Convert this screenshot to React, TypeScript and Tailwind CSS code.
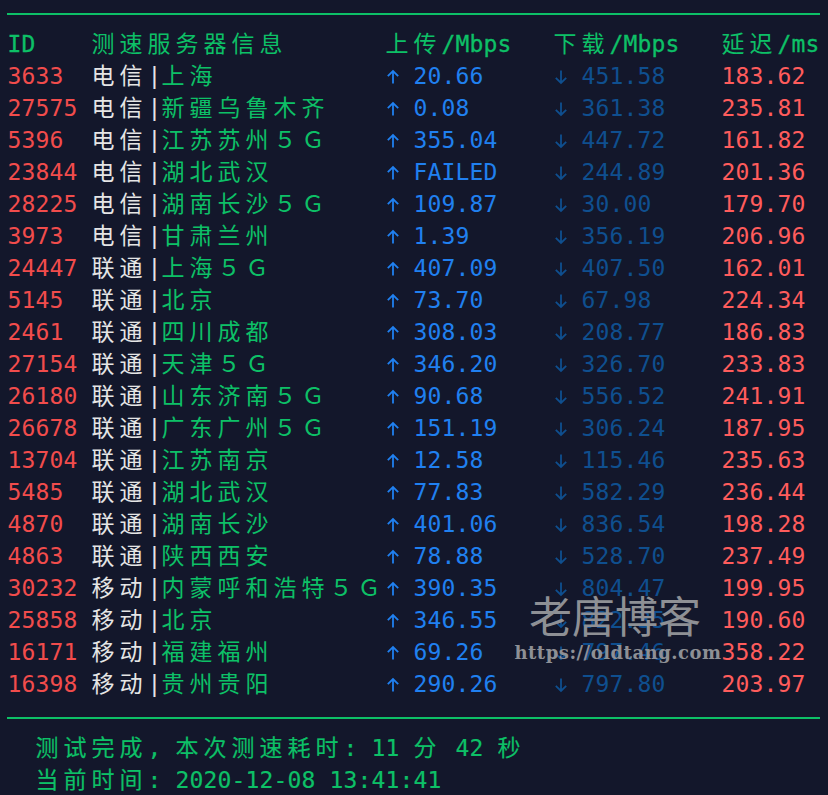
const rows: [string, string, string, string, string, string][] = [
  ["3633", "电信", "上海", "20.66", "451.58", "183.62"],
  ["27575", "电信", "新疆乌鲁木齐", "0.08", "361.38", "235.81"],
  ["5396", "电信", "江苏苏州５Ｇ", "355.04", "447.72", "161.82"],
  ["23844", "电信", "湖北武汉", "FAILED", "244.89", "201.36"],
  ["28225", "电信", "湖南长沙５Ｇ", "109.87", "30.00", "179.70"],
  ["3973", "电信", "甘肃兰州", "1.39", "356.19", "206.96"],
  ["24447", "联通", "上海５Ｇ", "407.09", "407.50", "162.01"],
  ["5145", "联通", "北京", "73.70", "67.98", "224.34"],
  ["2461", "联通", "四川成都", "308.03", "208.77", "186.83"],
  ["27154", "联通", "天津５Ｇ", "346.20", "326.70", "233.83"],
  ["26180", "联通", "山东济南５Ｇ", "90.68", "556.52", "241.91"],
  ["26678", "联通", "广东广州５Ｇ", "151.19", "306.24", "187.95"],
  ["13704", "联通", "江苏南京", "12.58", "115.46", "235.63"],
  ["5485", "联通", "湖北武汉", "77.83", "582.29", "236.44"],
  ["4870", "联通", "湖南长沙", "401.06", "836.54", "198.28"],
  ["4863", "联通", "陕西西安", "78.88", "528.70", "237.49"],
  ["30232", "移动", "内蒙呼和浩特５Ｇ", "390.35", "804.47", "199.95"],
  ["25858", "移动", "北京", "346.55", "822.35", "190.60"],
  ["16171", "移动", "福建福州", "69.26", "797.46", "358.22"],
  ["16398", "移动", "贵州贵阳", "290.26", "797.80", "203.97"],
];

function Cells({ text }: { text: string }) {
  return (
    <>
      {Array.from(text).map((c, i) =>
        c.charCodeAt(0) > 255 ? (
          <span key={i} className="inline-block w-[28px]">{c}</span>
        ) : (
          <span key={i} className="inline-block w-[14px] whitespace-pre">{c}</span>
        )
      )}
    </>
  );
}

function Arrow({ down }: { down?: boolean }) {
  return (
    <svg width="14" height="16" viewBox="0 0 14 16" fill="none" stroke="currentColor" strokeWidth="1.8" className={down ? "mr-[14px] inline-block rotate-180 align-[-1px]" : "mr-[14px] inline-block align-[-1px]"}>
      <path d="M7 14.5V2M1.8 7.2 7 2l5.2 5.2" />
    </svg>
  );
}

function Row({ children }: { children: React.ReactNode }) {
  return <div className="grid h-[32px] grid-cols-[84px_294px_168px_168px_1fr] items-center whitespace-nowrap">{children}</div>;
}

export default function App() {
  return (
    <div
      className="relative h-[795px] w-[828px] overflow-hidden bg-[#13172b] pl-[7.5px] pt-[13px] text-[23px] leading-[32px] text-[#0dc067]"
      style={{ fontFamily: '"DejaVu Sans Mono","Noto Sans CJK SC",monospace' }}
    >
      <div className="ml-[-0.5px] h-[2px] w-[813px] bg-[#0dc067]" />
      <div className="mt-[13px]">
        <Row>
          <div className="[-webkit-text-stroke:0.3px]"><Cells text="ID" /></div>
          <div><Cells text="测速服务器信息" /></div>
          <div><Cells text="上传" /><span className="[-webkit-text-stroke:0.3px]"><Cells text="/Mbps" /></span></div>
          <div><Cells text="下载" /><span className="[-webkit-text-stroke:0.3px]"><Cells text="/Mbps" /></span></div>
          <div><Cells text="延迟" /><span className="[-webkit-text-stroke:0.3px]"><Cells text="/ms" /></span></div>
        </Row>
        {rows.map((r) => (
          <Row key={r[0]}>
            <div className="text-[#f14c4c]"><Cells text={r[0]} /></div>
            <div>
              <span className="text-[#e5e5e5]"><Cells text={r[1] + "|"} /></span>
              <Cells text={r[2]} />
            </div>
            <div className="text-[#2080f0]"><Arrow /><Cells text={r[3]} /></div>
            <div className="text-[#0f4f8f]"><Arrow down /><Cells text={r[4]} /></div>
            <div className="text-[#ff5c5c]"><Cells text={r[5]} /></div>
          </Row>
        ))}
      </div>
      <div className="ml-[-0.5px] mt-[17px] h-[2px] w-[813px] bg-[#0dc067]" />
      <div className="mt-[13px] pl-[28px] [-webkit-text-stroke:0.15px]">
        <div className="h-[32px]"><Cells text="测试完成, 本次测速耗时: 11 分 42 秒" /></div>
        <div className="h-[32px]"><Cells text="当前时间: 2020-12-08 13:41:41" /></div>
      </div>
      <div className="absolute left-[515px] top-[589px] flex w-[206px] flex-col items-center text-[#8e9095]">
        <div className="pr-[6px] text-[43px] leading-[50px] whitespace-nowrap" style={{ fontFamily: '"Noto Sans CJK SC",sans-serif' }}>老唐博客</div>
        <div className="mt-[2px] text-[18px] font-bold leading-[24px] tracking-[0.5px] whitespace-nowrap" style={{ fontFamily: '"DejaVu Serif",serif' }}>https://oldtang.com</div>
      </div>
    </div>
  );
}
